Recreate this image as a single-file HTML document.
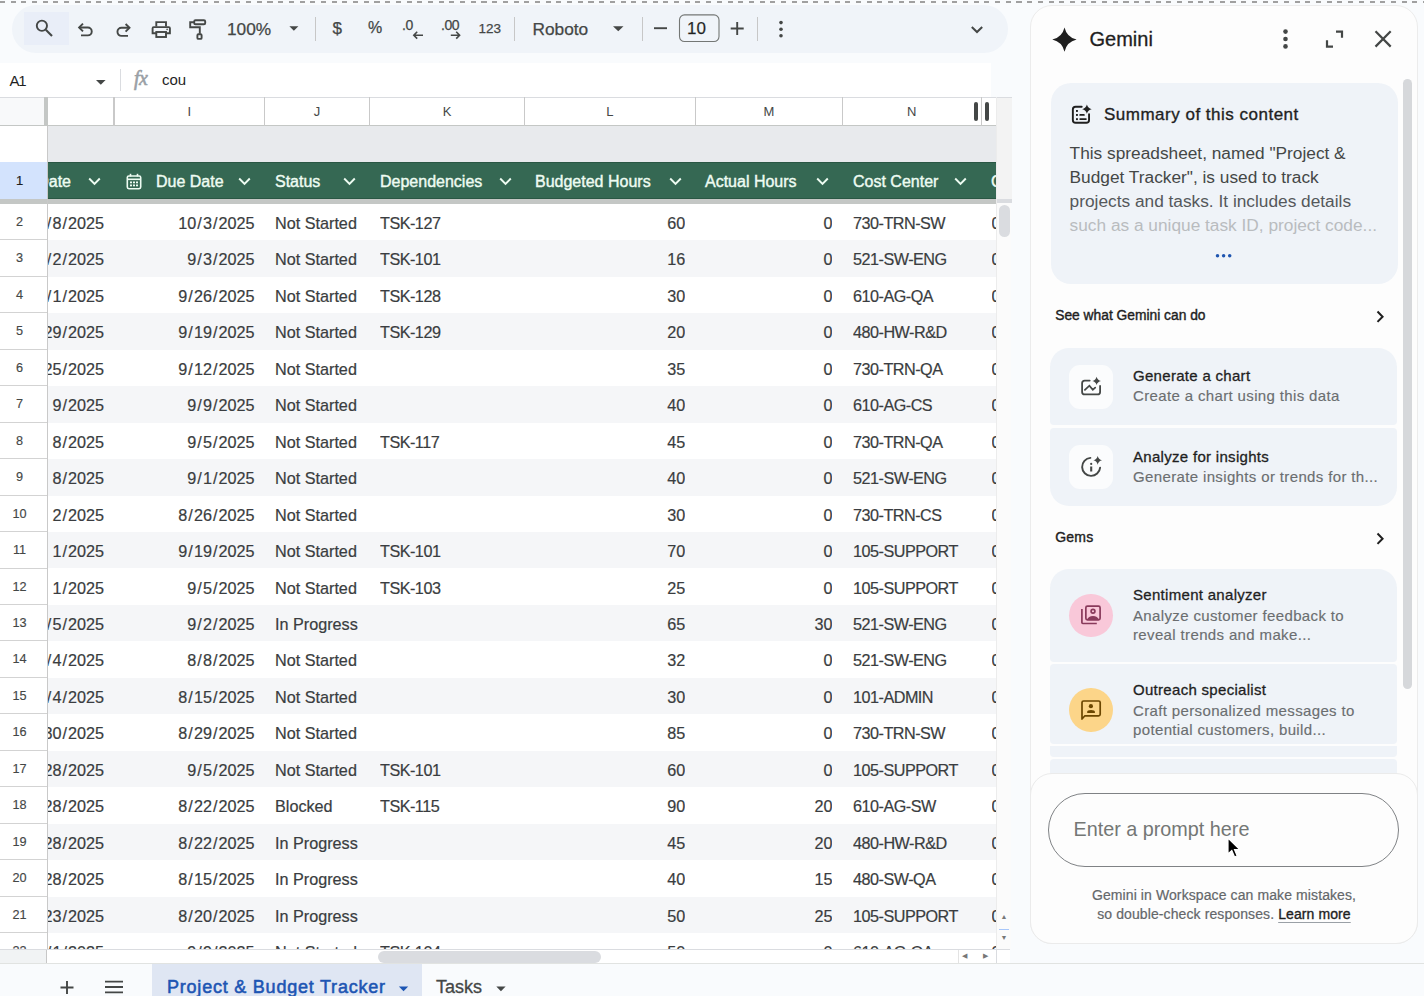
<!DOCTYPE html>
<html><head><meta charset="utf-8">
<style>
*{box-sizing:border-box;margin:0;padding:0}
html,body{width:1424px;height:996px;overflow:hidden;background:#f9fbfd;font-family:"Liberation Sans",sans-serif;color:#1f1f1f}
.abs{position:absolute}
.sl{margin:0 1.05px}
#dash{position:absolute;left:0;top:1.2px;width:1424px;height:1.6px;background:repeating-linear-gradient(90deg,#a0a0a0 0 5px,transparent 5px 10.7px)}
#tb{position:absolute;left:12px;top:5px;width:996px;height:48px;border-radius:24px;background:#f0f4f9}
.sep{position:absolute;top:12px;width:1px;height:24px;background:#c7c7c7}
.tt{position:absolute;font-size:17px;color:#444746;white-space:nowrap;-webkit-text-stroke:0.25px #444746}
#fb{position:absolute;left:0;top:63px;width:991px;height:34px;background:#fff}
#grid{position:absolute;left:0;top:97px;width:996px;height:852px;background:#fff;overflow:hidden}
.colL{top:7px;text-align:center;font-size:13px;color:#444746;line-height:15px}
.vl{position:absolute;width:1.2px;background:#c9c9c9}
.rn{left:0;width:47px;padding-right:8px;height:36.5px;border-bottom:1.5px solid #d3d3d3;background:#fff;font-size:12.7px;color:#444746;text-align:center;line-height:37px;-webkit-text-stroke:0.15px #444746}
.c{position:absolute;height:36px;line-height:39.6px;font-size:16.2px;color:#3a3d40;-webkit-text-stroke:0.2px #3a3d40;white-space:nowrap;overflow:hidden}
.hd{position:absolute;top:65px;left:48px;width:948px;height:37px;background:#356853;border-top:1px solid #2a5744;border-bottom:1px solid #2a5744}
.hd .h{position:absolute;top:0;line-height:37.5px;font-size:16px;color:#eefcf2;-webkit-text-stroke:0.4px #eefcf2;white-space:nowrap}
#vs{position:absolute;left:996px;top:97px;width:14.5px;height:852px;background:#fbfbfb;border-left:1px solid #ececec}
#hs{position:absolute;left:0;top:949px;width:1010px;height:14px;background:#fff;border-top:1px solid #dadce0}
#bb{position:absolute;left:0;top:963px;width:1424px;height:33px;background:#f9fbfd;border-top:1px solid #e1e3e1}
#gp{position:absolute;left:1029.5px;top:5px;width:388px;height:939px;border-radius:22px;background:#fdfdfd;border:1px solid #ececec}
.card{position:absolute;left:20px;width:347px;background:#f0f4f9}
.gt{position:absolute;white-space:nowrap}
</style></head><body>
<div id="dash"></div>
<div id="tb"></div>
<div class="abs" style="left:23.5px;top:12px;width:45px;height:33px;background:#e9eef8"></div>
<svg class="abs" style="left:0;top:0" width="1010" height="60" viewBox="0 0 1010 60" fill="none" stroke="#444746" stroke-width="1.9">
 <circle cx="41.9" cy="25.75" r="5.1"/><path d="M45.8 29.7 L52 35.9" stroke-width="2.1"/>
 <path d="M81 35.4 H87.8 A3.95 3.95 0 0 0 87.8 27.5 H79.5"/><path d="M83 23.6 L79.1 27.5 L83 31.4"/>
 <path d="M128 35.9 H121.5 A4.05 4.05 0 0 1 121.5 27.8 H129"/><path d="M125.6 24 L129.5 27.8 L125.6 31.6"/>
 <path d="M156.3 26.5 V22.1 H166 V26.5"/><path d="M156.3 33.3 H152.6 V28.2 Q152.6 27.1 153.7 27.1 H168.8 Q169.9 27.1 169.9 28.2 V33.3 H166"/><rect x="156.3" y="32" width="9.7" height="5" />
 <circle cx="167.1" cy="29.4" r="0.8" fill="#444746" stroke="none"/>
 <rect x="194.2" y="20.2" width="11" height="4" rx="1.3"/><path d="M194.2 22.3 H190.2 V27.3 H199.8 V33.8"/><rect x="197.4" y="34.2" width="4.2" height="4.7" rx="1"/>
 <path d="M289.4 26.3 H298.4 L293.9 30.8Z" fill="#444746" stroke="none"/>
 <path d="M613 26.3 H623.5 L618.25 31.3Z" fill="#444746" stroke="none"/>
 <path d="M654 28.2 H667"/><path d="M730.7 28.5 H743.7 M737.2 22 V35"/>
 <rect x="679.5" y="14.9" width="39.5" height="26.6" rx="5" stroke="#747775" stroke-width="1.1"/>
 <circle cx="781" cy="22.6" r="1.8" fill="#444746" stroke="none"/><circle cx="781" cy="29.2" r="1.8" fill="#444746" stroke="none"/><circle cx="781" cy="35.8" r="1.8" fill="#444746" stroke="none"/>
 <path d="M971.8 27 L977 32 L982.2 27" stroke-width="2"/>
 <path d="M413.5 35.2 H423 M417.2 31.8 L413.8 35.2 L417.2 38.6" stroke-width="1.6"/>
 <path d="M450.8 35.2 H459.6 M456.2 31.8 L459.6 35.2 L456.2 38.6" stroke-width="1.6"/>
</svg>
<div class="sep" style="left:314.6px;top:17px"></div>
<div class="sep" style="left:513.5px;top:17px"></div>
<div class="sep" style="left:641.5px;top:17px"></div>
<div class="sep" style="left:757px;top:17px"></div>
<div class="tt" style="left:227px;top:19px;font-size:17.3px">100%</div>
<div class="tt" style="left:332.5px;top:18.5px;font-size:17px">$</div>
<div class="tt" style="left:368px;top:19px;font-size:16px">%</div>
<div class="tt" style="left:402px;top:17px;font-size:14px;letter-spacing:-0.5px">.0</div>
<div class="tt" style="left:441px;top:17px;font-size:14px;letter-spacing:-0.5px">.00</div>
<div class="tt" style="left:478.5px;top:21px;font-size:13.5px">123</div>
<div class="tt" style="left:532.5px;top:19px;font-size:17.3px">Roboto</div>
<div class="tt" style="left:687px;top:19px;font-size:17px;color:#1f1f1f">10</div>
<div id="fb">
 <div class="abs" style="left:9.5px;top:8.5px;font-size:15px;color:#1f1f1f;letter-spacing:-1.3px">A1</div>
 <svg class="abs" style="left:96px;top:16.5px" width="10" height="5" viewBox="0 0 10 5"><path d="M0 0 L9.6 0 L4.8 4.8Z" fill="#444746"/></svg>
 <div class="abs" style="left:120px;top:6px;width:1px;height:22px;background:#dadce0"></div>
 <div class="abs" style="left:134px;top:4px;font-family:'Liberation Serif',serif;font-style:italic;font-size:20px;color:#9aa0a6;-webkit-text-stroke:0.6px #9aa0a6;letter-spacing:-0.5px">fx</div>
 <div class="abs" style="left:162px;top:8px;font-size:15px;color:#1f1f1f">cou</div>
</div>
<div id="grid"><div class="abs" style="left:0;top:0;width:996px;height:29px;background:#fff;border-bottom:1.5px solid #c4c7c5;border-top:1px solid #dadce0"></div><div class="abs" style="left:0;top:0;width:44px;height:29px;background:#f8f9fa;border-bottom:1.5px solid #c4c7c5;border-top:1px solid #dadce0"></div><div class="abs" style="left:44px;top:0;width:4px;height:29px;background:#c4c7c5"></div><div class="vl" style="left:113.4px;top:0;height:29px"></div><div class="abs colL" style="left:114px;width:150.5px">I</div><div class="vl" style="left:263.9px;top:0;height:29px"></div><div class="abs colL" style="left:264.5px;width:105.0px">J</div><div class="vl" style="left:368.9px;top:0;height:29px"></div><div class="abs colL" style="left:369.5px;width:155.0px">K</div><div class="vl" style="left:523.9px;top:0;height:29px"></div><div class="abs colL" style="left:524.5px;width:170.79999999999995px">L</div><div class="vl" style="left:694.6999999999999px;top:0;height:29px"></div><div class="abs colL" style="left:695.3px;width:147.20000000000005px">M</div><div class="vl" style="left:841.9px;top:0;height:29px"></div><div class="abs colL" style="left:842.5px;width:138.5px">N</div><div class="vl" style="left:981px;top:0;height:29px"></div><div class="abs" style="left:974px;top:5px;width:4px;height:19px;border-radius:2px;background:#444746"></div><div class="abs" style="left:984.5px;top:5px;width:4px;height:19px;border-radius:2px;background:#444746"></div><div class="abs" style="left:0;top:29px;width:47px;height:36px;background:#fff"></div><div class="abs" style="left:48px;top:29px;width:948px;height:36px;background:#e8eaed"></div><div class="vl" style="left:47px;top:29px;height:823px"></div><div class="abs" style="left:0;top:65px;width:47px;height:37px;background:#d3e3fd;font-size:13px;color:#1f1f1f;text-align:center;line-height:37px;padding-right:8px;-webkit-text-stroke:0.2px #1f1f1f">1</div><div class="hd"><div class="h" style="left:-1px;width:24px;overflow:hidden;direction:rtl">Date</div><svg class="abs" style="left:40px;top:14px" width="13" height="9" viewBox="0 0 13 9"><path d="M1.2 1.5 L6.5 7 L11.8 1.5" fill="none" stroke="#eefcf2" stroke-width="1.9"/></svg><svg class="abs" style="left:78px;top:10px" width="16" height="17" viewBox="0 0 16 17"><rect x="1.3" y="3" width="13.4" height="12.7" rx="1.6" fill="none" stroke="#eefcf2" stroke-width="1.6"/><line x1="1.3" y1="6.3" x2="14.7" y2="6.3" stroke="#eefcf2" stroke-width="1.6"/><line x1="4.5" y1="0.8" x2="4.5" y2="3.5" stroke="#eefcf2" stroke-width="1.6"/><line x1="11.5" y1="0.8" x2="11.5" y2="3.5" stroke="#eefcf2" stroke-width="1.6"/><g fill="#eefcf2"><rect x="4" y="8.5" width="2" height="1.8"/><rect x="7" y="8.5" width="2" height="1.8"/><rect x="10" y="8.5" width="2" height="1.8"/><rect x="4" y="11.5" width="2" height="1.8"/><rect x="7" y="11.5" width="2" height="1.8"/><rect x="10" y="11.5" width="2" height="1.8"/></g></svg><div class="h" style="left:108px">Due Date</div><svg class="abs" style="left:190px;top:14px" width="13" height="9" viewBox="0 0 13 9"><path d="M1.2 1.5 L6.5 7 L11.8 1.5" fill="none" stroke="#eefcf2" stroke-width="1.9"/></svg><div class="h" style="left:227px">Status</div><svg class="abs" style="left:295px;top:14px" width="13" height="9" viewBox="0 0 13 9"><path d="M1.2 1.5 L6.5 7 L11.8 1.5" fill="none" stroke="#eefcf2" stroke-width="1.9"/></svg><div class="h" style="left:332px">Dependencies</div><svg class="abs" style="left:451px;top:14px" width="13" height="9" viewBox="0 0 13 9"><path d="M1.2 1.5 L6.5 7 L11.8 1.5" fill="none" stroke="#eefcf2" stroke-width="1.9"/></svg><div class="h" style="left:487px">Budgeted Hours</div><svg class="abs" style="left:621px;top:14px" width="13" height="9" viewBox="0 0 13 9"><path d="M1.2 1.5 L6.5 7 L11.8 1.5" fill="none" stroke="#eefcf2" stroke-width="1.9"/></svg><div class="h" style="left:657px">Actual Hours</div><svg class="abs" style="left:768px;top:14px" width="13" height="9" viewBox="0 0 13 9"><path d="M1.2 1.5 L6.5 7 L11.8 1.5" fill="none" stroke="#eefcf2" stroke-width="1.9"/></svg><div class="h" style="left:805px">Cost Center</div><svg class="abs" style="left:906px;top:14px" width="13" height="9" viewBox="0 0 13 9"><path d="M1.2 1.5 L6.5 7 L11.8 1.5" fill="none" stroke="#eefcf2" stroke-width="1.9"/></svg><div class="h" style="left:943px">Cost</div></div><div class="abs" style="left:0;top:102px;width:996px;height:4.7px;background:#c4c7c5"></div><div class="abs" style="left:0;top:106.69999999999999px;width:47px;height:36.48px;border-bottom:1.5px solid #d3d3d3;background:#fff"><span class="rnum">2</span></div><div class="abs" style="left:48px;top:106.69999999999999px;width:948px;height:36.48px;background:#fff"></div><div class="c" style="left:-12px;width:116px;top:106.69999999999999px;text-align:right">9<span class="sl">/</span>8<span class="sl">/</span>2025</div><div class="c" style="left:114px;width:140.5px;top:106.69999999999999px;text-align:right">10<span class="sl">/</span>3<span class="sl">/</span>2025</div><div class="c" style="left:275.0px;width:95.0px;top:106.69999999999999px;">Not Started</div><div class="c" style="left:380.0px;width:145.0px;top:106.69999999999999px;letter-spacing:-0.5px;">TSK-127</div><div class="c" style="left:524.5px;width:160.79999999999995px;top:106.69999999999999px;text-align:right">60</div><div class="c" style="left:695.3px;width:137.20000000000005px;top:106.69999999999999px;text-align:right">0</div><div class="c" style="left:853.0px;width:128.5px;top:106.69999999999999px;letter-spacing:-0.5px;">730-TRN-SW</div><div class="c" style="left:991.5px;width:69px;top:106.69999999999999px;">0</div><div class="abs" style="left:0;top:143.17999999999998px;width:47px;height:36.48px;border-bottom:1.5px solid #d3d3d3;background:#fff"><span class="rnum">3</span></div><div class="abs" style="left:48px;top:143.17999999999998px;width:948px;height:36.48px;background:#f5f6f8"></div><div class="c" style="left:-12px;width:116px;top:143.17999999999998px;text-align:right">9<span class="sl">/</span>2<span class="sl">/</span>2025</div><div class="c" style="left:114px;width:140.5px;top:143.17999999999998px;text-align:right">9<span class="sl">/</span>3<span class="sl">/</span>2025</div><div class="c" style="left:275.0px;width:95.0px;top:143.17999999999998px;">Not Started</div><div class="c" style="left:380.0px;width:145.0px;top:143.17999999999998px;letter-spacing:-0.5px;">TSK-101</div><div class="c" style="left:524.5px;width:160.79999999999995px;top:143.17999999999998px;text-align:right">16</div><div class="c" style="left:695.3px;width:137.20000000000005px;top:143.17999999999998px;text-align:right">0</div><div class="c" style="left:853.0px;width:128.5px;top:143.17999999999998px;letter-spacing:-0.5px;">521-SW-ENG</div><div class="c" style="left:991.5px;width:69px;top:143.17999999999998px;">0</div><div class="abs" style="left:0;top:179.65999999999997px;width:47px;height:36.48px;border-bottom:1.5px solid #d3d3d3;background:#fff"><span class="rnum">4</span></div><div class="abs" style="left:48px;top:179.65999999999997px;width:948px;height:36.48px;background:#fff"></div><div class="c" style="left:-12px;width:116px;top:179.65999999999997px;text-align:right">9<span class="sl">/</span>1<span class="sl">/</span>2025</div><div class="c" style="left:114px;width:140.5px;top:179.65999999999997px;text-align:right">9<span class="sl">/</span>26<span class="sl">/</span>2025</div><div class="c" style="left:275.0px;width:95.0px;top:179.65999999999997px;">Not Started</div><div class="c" style="left:380.0px;width:145.0px;top:179.65999999999997px;letter-spacing:-0.5px;">TSK-128</div><div class="c" style="left:524.5px;width:160.79999999999995px;top:179.65999999999997px;text-align:right">30</div><div class="c" style="left:695.3px;width:137.20000000000005px;top:179.65999999999997px;text-align:right">0</div><div class="c" style="left:853.0px;width:128.5px;top:179.65999999999997px;letter-spacing:-0.5px;">610-AG-QA</div><div class="c" style="left:991.5px;width:69px;top:179.65999999999997px;">0</div><div class="abs" style="left:0;top:216.14px;width:47px;height:36.48px;border-bottom:1.5px solid #d3d3d3;background:#fff"><span class="rnum">5</span></div><div class="abs" style="left:48px;top:216.14px;width:948px;height:36.48px;background:#f5f6f8"></div><div class="c" style="left:-12px;width:116px;top:216.14px;text-align:right">8<span class="sl">/</span>29<span class="sl">/</span>2025</div><div class="c" style="left:114px;width:140.5px;top:216.14px;text-align:right">9<span class="sl">/</span>19<span class="sl">/</span>2025</div><div class="c" style="left:275.0px;width:95.0px;top:216.14px;">Not Started</div><div class="c" style="left:380.0px;width:145.0px;top:216.14px;letter-spacing:-0.5px;">TSK-129</div><div class="c" style="left:524.5px;width:160.79999999999995px;top:216.14px;text-align:right">20</div><div class="c" style="left:695.3px;width:137.20000000000005px;top:216.14px;text-align:right">0</div><div class="c" style="left:853.0px;width:128.5px;top:216.14px;letter-spacing:-0.5px;">480-HW-R&amp;D</div><div class="c" style="left:991.5px;width:69px;top:216.14px;">0</div><div class="abs" style="left:0;top:252.62px;width:47px;height:36.48px;border-bottom:1.5px solid #d3d3d3;background:#fff"><span class="rnum">6</span></div><div class="abs" style="left:48px;top:252.62px;width:948px;height:36.48px;background:#fff"></div><div class="c" style="left:-12px;width:116px;top:252.62px;text-align:right">8<span class="sl">/</span>25<span class="sl">/</span>2025</div><div class="c" style="left:114px;width:140.5px;top:252.62px;text-align:right">9<span class="sl">/</span>12<span class="sl">/</span>2025</div><div class="c" style="left:275.0px;width:95.0px;top:252.62px;">Not Started</div><div class="c" style="left:524.5px;width:160.79999999999995px;top:252.62px;text-align:right">35</div><div class="c" style="left:695.3px;width:137.20000000000005px;top:252.62px;text-align:right">0</div><div class="c" style="left:853.0px;width:128.5px;top:252.62px;letter-spacing:-0.5px;">730-TRN-QA</div><div class="c" style="left:991.5px;width:69px;top:252.62px;">0</div><div class="abs" style="left:0;top:289.09999999999997px;width:47px;height:36.48px;border-bottom:1.5px solid #d3d3d3;background:#fff"><span class="rnum">7</span></div><div class="abs" style="left:48px;top:289.09999999999997px;width:948px;height:36.48px;background:#f5f6f8"></div><div class="c" style="left:-12px;width:116px;top:289.09999999999997px;text-align:right">9<span class="sl">/</span>2025</div><div class="c" style="left:114px;width:140.5px;top:289.09999999999997px;text-align:right">9<span class="sl">/</span>9<span class="sl">/</span>2025</div><div class="c" style="left:275.0px;width:95.0px;top:289.09999999999997px;">Not Started</div><div class="c" style="left:524.5px;width:160.79999999999995px;top:289.09999999999997px;text-align:right">40</div><div class="c" style="left:695.3px;width:137.20000000000005px;top:289.09999999999997px;text-align:right">0</div><div class="c" style="left:853.0px;width:128.5px;top:289.09999999999997px;letter-spacing:-0.5px;">610-AG-CS</div><div class="c" style="left:991.5px;width:69px;top:289.09999999999997px;">0</div><div class="abs" style="left:0;top:325.58px;width:47px;height:36.48px;border-bottom:1.5px solid #d3d3d3;background:#fff"><span class="rnum">8</span></div><div class="abs" style="left:48px;top:325.58px;width:948px;height:36.48px;background:#fff"></div><div class="c" style="left:-12px;width:116px;top:325.58px;text-align:right">8<span class="sl">/</span>2025</div><div class="c" style="left:114px;width:140.5px;top:325.58px;text-align:right">9<span class="sl">/</span>5<span class="sl">/</span>2025</div><div class="c" style="left:275.0px;width:95.0px;top:325.58px;">Not Started</div><div class="c" style="left:380.0px;width:145.0px;top:325.58px;letter-spacing:-0.5px;">TSK-117</div><div class="c" style="left:524.5px;width:160.79999999999995px;top:325.58px;text-align:right">45</div><div class="c" style="left:695.3px;width:137.20000000000005px;top:325.58px;text-align:right">0</div><div class="c" style="left:853.0px;width:128.5px;top:325.58px;letter-spacing:-0.5px;">730-TRN-QA</div><div class="c" style="left:991.5px;width:69px;top:325.58px;">0</div><div class="abs" style="left:0;top:362.05999999999995px;width:47px;height:36.48px;border-bottom:1.5px solid #d3d3d3;background:#fff"><span class="rnum">9</span></div><div class="abs" style="left:48px;top:362.05999999999995px;width:948px;height:36.48px;background:#f5f6f8"></div><div class="c" style="left:-12px;width:116px;top:362.05999999999995px;text-align:right">8<span class="sl">/</span>2025</div><div class="c" style="left:114px;width:140.5px;top:362.05999999999995px;text-align:right">9<span class="sl">/</span>1<span class="sl">/</span>2025</div><div class="c" style="left:275.0px;width:95.0px;top:362.05999999999995px;">Not Started</div><div class="c" style="left:524.5px;width:160.79999999999995px;top:362.05999999999995px;text-align:right">40</div><div class="c" style="left:695.3px;width:137.20000000000005px;top:362.05999999999995px;text-align:right">0</div><div class="c" style="left:853.0px;width:128.5px;top:362.05999999999995px;letter-spacing:-0.5px;">521-SW-ENG</div><div class="c" style="left:991.5px;width:69px;top:362.05999999999995px;">0</div><div class="abs" style="left:0;top:398.53999999999996px;width:47px;height:36.48px;border-bottom:1.5px solid #d3d3d3;background:#fff"><span class="rnum">10</span></div><div class="abs" style="left:48px;top:398.53999999999996px;width:948px;height:36.48px;background:#fff"></div><div class="c" style="left:-12px;width:116px;top:398.53999999999996px;text-align:right">2<span class="sl">/</span>2025</div><div class="c" style="left:114px;width:140.5px;top:398.53999999999996px;text-align:right">8<span class="sl">/</span>26<span class="sl">/</span>2025</div><div class="c" style="left:275.0px;width:95.0px;top:398.53999999999996px;">Not Started</div><div class="c" style="left:524.5px;width:160.79999999999995px;top:398.53999999999996px;text-align:right">30</div><div class="c" style="left:695.3px;width:137.20000000000005px;top:398.53999999999996px;text-align:right">0</div><div class="c" style="left:853.0px;width:128.5px;top:398.53999999999996px;letter-spacing:-0.5px;">730-TRN-CS</div><div class="c" style="left:991.5px;width:69px;top:398.53999999999996px;">0</div><div class="abs" style="left:0;top:435.02px;width:47px;height:36.48px;border-bottom:1.5px solid #d3d3d3;background:#fff"><span class="rnum">11</span></div><div class="abs" style="left:48px;top:435.02px;width:948px;height:36.48px;background:#f5f6f8"></div><div class="c" style="left:-12px;width:116px;top:435.02px;text-align:right">1<span class="sl">/</span>2025</div><div class="c" style="left:114px;width:140.5px;top:435.02px;text-align:right">9<span class="sl">/</span>19<span class="sl">/</span>2025</div><div class="c" style="left:275.0px;width:95.0px;top:435.02px;">Not Started</div><div class="c" style="left:380.0px;width:145.0px;top:435.02px;letter-spacing:-0.5px;">TSK-101</div><div class="c" style="left:524.5px;width:160.79999999999995px;top:435.02px;text-align:right">70</div><div class="c" style="left:695.3px;width:137.20000000000005px;top:435.02px;text-align:right">0</div><div class="c" style="left:853.0px;width:128.5px;top:435.02px;letter-spacing:-0.5px;">105-SUPPORT</div><div class="c" style="left:991.5px;width:69px;top:435.02px;">0</div><div class="abs" style="left:0;top:471.5px;width:47px;height:36.48px;border-bottom:1.5px solid #d3d3d3;background:#fff"><span class="rnum">12</span></div><div class="abs" style="left:48px;top:471.5px;width:948px;height:36.48px;background:#fff"></div><div class="c" style="left:-12px;width:116px;top:471.5px;text-align:right">1<span class="sl">/</span>2025</div><div class="c" style="left:114px;width:140.5px;top:471.5px;text-align:right">9<span class="sl">/</span>5<span class="sl">/</span>2025</div><div class="c" style="left:275.0px;width:95.0px;top:471.5px;">Not Started</div><div class="c" style="left:380.0px;width:145.0px;top:471.5px;letter-spacing:-0.5px;">TSK-103</div><div class="c" style="left:524.5px;width:160.79999999999995px;top:471.5px;text-align:right">25</div><div class="c" style="left:695.3px;width:137.20000000000005px;top:471.5px;text-align:right">0</div><div class="c" style="left:853.0px;width:128.5px;top:471.5px;letter-spacing:-0.5px;">105-SUPPORT</div><div class="c" style="left:991.5px;width:69px;top:471.5px;">0</div><div class="abs" style="left:0;top:507.98px;width:47px;height:36.48px;border-bottom:1.5px solid #d3d3d3;background:#fff"><span class="rnum">13</span></div><div class="abs" style="left:48px;top:507.98px;width:948px;height:36.48px;background:#f5f6f8"></div><div class="c" style="left:-12px;width:116px;top:507.98px;text-align:right">7<span class="sl">/</span>5<span class="sl">/</span>2025</div><div class="c" style="left:114px;width:140.5px;top:507.98px;text-align:right">9<span class="sl">/</span>2<span class="sl">/</span>2025</div><div class="c" style="left:275.0px;width:95.0px;top:507.98px;">In Progress</div><div class="c" style="left:524.5px;width:160.79999999999995px;top:507.98px;text-align:right">65</div><div class="c" style="left:695.3px;width:137.20000000000005px;top:507.98px;text-align:right">30</div><div class="c" style="left:853.0px;width:128.5px;top:507.98px;letter-spacing:-0.5px;">521-SW-ENG</div><div class="c" style="left:991.5px;width:69px;top:507.98px;">0</div><div class="abs" style="left:0;top:544.46px;width:47px;height:36.48px;border-bottom:1.5px solid #d3d3d3;background:#fff"><span class="rnum">14</span></div><div class="abs" style="left:48px;top:544.46px;width:948px;height:36.48px;background:#fff"></div><div class="c" style="left:-12px;width:116px;top:544.46px;text-align:right">7<span class="sl">/</span>4<span class="sl">/</span>2025</div><div class="c" style="left:114px;width:140.5px;top:544.46px;text-align:right">8<span class="sl">/</span>8<span class="sl">/</span>2025</div><div class="c" style="left:275.0px;width:95.0px;top:544.46px;">Not Started</div><div class="c" style="left:524.5px;width:160.79999999999995px;top:544.46px;text-align:right">32</div><div class="c" style="left:695.3px;width:137.20000000000005px;top:544.46px;text-align:right">0</div><div class="c" style="left:853.0px;width:128.5px;top:544.46px;letter-spacing:-0.5px;">521-SW-ENG</div><div class="c" style="left:991.5px;width:69px;top:544.46px;">0</div><div class="abs" style="left:0;top:580.9399999999999px;width:47px;height:36.48px;border-bottom:1.5px solid #d3d3d3;background:#fff"><span class="rnum">15</span></div><div class="abs" style="left:48px;top:580.9399999999999px;width:948px;height:36.48px;background:#f5f6f8"></div><div class="c" style="left:-12px;width:116px;top:580.9399999999999px;text-align:right">7<span class="sl">/</span>4<span class="sl">/</span>2025</div><div class="c" style="left:114px;width:140.5px;top:580.9399999999999px;text-align:right">8<span class="sl">/</span>15<span class="sl">/</span>2025</div><div class="c" style="left:275.0px;width:95.0px;top:580.9399999999999px;">Not Started</div><div class="c" style="left:524.5px;width:160.79999999999995px;top:580.9399999999999px;text-align:right">30</div><div class="c" style="left:695.3px;width:137.20000000000005px;top:580.9399999999999px;text-align:right">0</div><div class="c" style="left:853.0px;width:128.5px;top:580.9399999999999px;letter-spacing:-0.5px;">101-ADMIN</div><div class="c" style="left:991.5px;width:69px;top:580.9399999999999px;">0</div><div class="abs" style="left:0;top:617.42px;width:47px;height:36.48px;border-bottom:1.5px solid #d3d3d3;background:#fff"><span class="rnum">16</span></div><div class="abs" style="left:48px;top:617.42px;width:948px;height:36.48px;background:#fff"></div><div class="c" style="left:-12px;width:116px;top:617.42px;text-align:right">7<span class="sl">/</span>30<span class="sl">/</span>2025</div><div class="c" style="left:114px;width:140.5px;top:617.42px;text-align:right">8<span class="sl">/</span>29<span class="sl">/</span>2025</div><div class="c" style="left:275.0px;width:95.0px;top:617.42px;">Not Started</div><div class="c" style="left:524.5px;width:160.79999999999995px;top:617.42px;text-align:right">85</div><div class="c" style="left:695.3px;width:137.20000000000005px;top:617.42px;text-align:right">0</div><div class="c" style="left:853.0px;width:128.5px;top:617.42px;letter-spacing:-0.5px;">730-TRN-SW</div><div class="c" style="left:991.5px;width:69px;top:617.42px;">0</div><div class="abs" style="left:0;top:653.8999999999999px;width:47px;height:36.48px;border-bottom:1.5px solid #d3d3d3;background:#fff"><span class="rnum">17</span></div><div class="abs" style="left:48px;top:653.8999999999999px;width:948px;height:36.48px;background:#f5f6f8"></div><div class="c" style="left:-12px;width:116px;top:653.8999999999999px;text-align:right">7<span class="sl">/</span>28<span class="sl">/</span>2025</div><div class="c" style="left:114px;width:140.5px;top:653.8999999999999px;text-align:right">9<span class="sl">/</span>5<span class="sl">/</span>2025</div><div class="c" style="left:275.0px;width:95.0px;top:653.8999999999999px;">Not Started</div><div class="c" style="left:380.0px;width:145.0px;top:653.8999999999999px;letter-spacing:-0.5px;">TSK-101</div><div class="c" style="left:524.5px;width:160.79999999999995px;top:653.8999999999999px;text-align:right">60</div><div class="c" style="left:695.3px;width:137.20000000000005px;top:653.8999999999999px;text-align:right">0</div><div class="c" style="left:853.0px;width:128.5px;top:653.8999999999999px;letter-spacing:-0.5px;">105-SUPPORT</div><div class="c" style="left:991.5px;width:69px;top:653.8999999999999px;">0</div><div class="abs" style="left:0;top:690.3799999999999px;width:47px;height:36.48px;border-bottom:1.5px solid #d3d3d3;background:#fff"><span class="rnum">18</span></div><div class="abs" style="left:48px;top:690.3799999999999px;width:948px;height:36.48px;background:#fff"></div><div class="c" style="left:-12px;width:116px;top:690.3799999999999px;text-align:right">7<span class="sl">/</span>28<span class="sl">/</span>2025</div><div class="c" style="left:114px;width:140.5px;top:690.3799999999999px;text-align:right">8<span class="sl">/</span>22<span class="sl">/</span>2025</div><div class="c" style="left:275.0px;width:95.0px;top:690.3799999999999px;">Blocked</div><div class="c" style="left:380.0px;width:145.0px;top:690.3799999999999px;letter-spacing:-0.5px;">TSK-115</div><div class="c" style="left:524.5px;width:160.79999999999995px;top:690.3799999999999px;text-align:right">90</div><div class="c" style="left:695.3px;width:137.20000000000005px;top:690.3799999999999px;text-align:right">20</div><div class="c" style="left:853.0px;width:128.5px;top:690.3799999999999px;letter-spacing:-0.5px;">610-AG-SW</div><div class="c" style="left:991.5px;width:69px;top:690.3799999999999px;">0</div><div class="abs" style="left:0;top:726.8599999999999px;width:47px;height:36.48px;border-bottom:1.5px solid #d3d3d3;background:#fff"><span class="rnum">19</span></div><div class="abs" style="left:48px;top:726.8599999999999px;width:948px;height:36.48px;background:#f5f6f8"></div><div class="c" style="left:-12px;width:116px;top:726.8599999999999px;text-align:right">7<span class="sl">/</span>28<span class="sl">/</span>2025</div><div class="c" style="left:114px;width:140.5px;top:726.8599999999999px;text-align:right">8<span class="sl">/</span>22<span class="sl">/</span>2025</div><div class="c" style="left:275.0px;width:95.0px;top:726.8599999999999px;">In Progress</div><div class="c" style="left:524.5px;width:160.79999999999995px;top:726.8599999999999px;text-align:right">45</div><div class="c" style="left:695.3px;width:137.20000000000005px;top:726.8599999999999px;text-align:right">20</div><div class="c" style="left:853.0px;width:128.5px;top:726.8599999999999px;letter-spacing:-0.5px;">480-HW-R&amp;D</div><div class="c" style="left:991.5px;width:69px;top:726.8599999999999px;">0</div><div class="abs" style="left:0;top:763.3399999999999px;width:47px;height:36.48px;border-bottom:1.5px solid #d3d3d3;background:#fff"><span class="rnum">20</span></div><div class="abs" style="left:48px;top:763.3399999999999px;width:948px;height:36.48px;background:#fff"></div><div class="c" style="left:-12px;width:116px;top:763.3399999999999px;text-align:right">7<span class="sl">/</span>28<span class="sl">/</span>2025</div><div class="c" style="left:114px;width:140.5px;top:763.3399999999999px;text-align:right">8<span class="sl">/</span>15<span class="sl">/</span>2025</div><div class="c" style="left:275.0px;width:95.0px;top:763.3399999999999px;">In Progress</div><div class="c" style="left:524.5px;width:160.79999999999995px;top:763.3399999999999px;text-align:right">40</div><div class="c" style="left:695.3px;width:137.20000000000005px;top:763.3399999999999px;text-align:right">15</div><div class="c" style="left:853.0px;width:128.5px;top:763.3399999999999px;letter-spacing:-0.5px;">480-SW-QA</div><div class="c" style="left:991.5px;width:69px;top:763.3399999999999px;">0</div><div class="abs" style="left:0;top:799.8199999999999px;width:47px;height:36.48px;border-bottom:1.5px solid #d3d3d3;background:#fff"><span class="rnum">21</span></div><div class="abs" style="left:48px;top:799.8199999999999px;width:948px;height:36.48px;background:#f5f6f8"></div><div class="c" style="left:-12px;width:116px;top:799.8199999999999px;text-align:right">7<span class="sl">/</span>23<span class="sl">/</span>2025</div><div class="c" style="left:114px;width:140.5px;top:799.8199999999999px;text-align:right">8<span class="sl">/</span>20<span class="sl">/</span>2025</div><div class="c" style="left:275.0px;width:95.0px;top:799.8199999999999px;">In Progress</div><div class="c" style="left:524.5px;width:160.79999999999995px;top:799.8199999999999px;text-align:right">50</div><div class="c" style="left:695.3px;width:137.20000000000005px;top:799.8199999999999px;text-align:right">25</div><div class="c" style="left:853.0px;width:128.5px;top:799.8199999999999px;letter-spacing:-0.5px;">105-SUPPORT</div><div class="c" style="left:991.5px;width:69px;top:799.8199999999999px;">0</div><div class="abs" style="left:0;top:836.3px;width:47px;height:36.48px;border-bottom:1.5px solid #d3d3d3;background:#fff"><span class="rnum">22</span></div><div class="abs" style="left:48px;top:836.3px;width:948px;height:36.48px;background:#fff"></div><div class="c" style="left:-12px;width:116px;top:836.3px;text-align:right">8<span class="sl">/</span>1<span class="sl">/</span>2025</div><div class="c" style="left:114px;width:140.5px;top:836.3px;text-align:right">9<span class="sl">/</span>9<span class="sl">/</span>2025</div><div class="c" style="left:275.0px;width:95.0px;top:836.3px;">Not Started</div><div class="c" style="left:380.0px;width:145.0px;top:836.3px;letter-spacing:-0.5px;">TSK-104</div><div class="c" style="left:524.5px;width:160.79999999999995px;top:836.3px;text-align:right">50</div><div class="c" style="left:695.3px;width:137.20000000000005px;top:836.3px;text-align:right">0</div><div class="c" style="left:853.0px;width:128.5px;top:836.3px;letter-spacing:-0.5px;">610-AG-QA</div><div class="c" style="left:991.5px;width:69px;top:836.3px;">0</div><div class="abs rn" style="top:106.69999999999999px">2</div><div class="abs rn" style="top:143.17999999999998px">3</div><div class="abs rn" style="top:179.65999999999997px">4</div><div class="abs rn" style="top:216.14px">5</div><div class="abs rn" style="top:252.62px">6</div><div class="abs rn" style="top:289.09999999999997px">7</div><div class="abs rn" style="top:325.58px">8</div><div class="abs rn" style="top:362.05999999999995px">9</div><div class="abs rn" style="top:398.53999999999996px">10</div><div class="abs rn" style="top:435.02px">11</div><div class="abs rn" style="top:471.5px">12</div><div class="abs rn" style="top:507.98px">13</div><div class="abs rn" style="top:544.46px">14</div><div class="abs rn" style="top:580.9399999999999px">15</div><div class="abs rn" style="top:617.42px">16</div><div class="abs rn" style="top:653.8999999999999px">17</div><div class="abs rn" style="top:690.3799999999999px">18</div><div class="abs rn" style="top:726.8599999999999px">19</div><div class="abs rn" style="top:763.3399999999999px">20</div><div class="abs rn" style="top:799.8199999999999px">21</div><div class="abs rn" style="top:836.3px">22</div><div class="vl" style="left:47px;top:29px;height:823px"></div></div><div id="vs"><div class="abs" style="left:0;top:0;width:14.5px;height:102px;background:#f3f3f3;border-top:1px solid #dadce0"></div><div class="abs" style="left:0;top:101.5px;width:14.5px;height:4px;background:#dadce0"></div><div class="abs" style="left:2px;top:108px;width:11.2px;height:32px;border-radius:5.5px;background:#dadce0"></div><div class="abs" style="left:3.5px;top:816px;font-size:7px;color:#777">&#9650;</div><div class="abs" style="left:2px;top:832px;width:10px;height:1px;background:#a8c7fa"></div><div class="abs" style="left:3.5px;top:837px;font-size:7px;color:#777">&#9660;</div></div><div id="hs"><div class="abs" style="left:0;top:0;width:47px;height:14px;background:#f1f3f4;border-right:1px solid #c7c7c7"></div><div class="abs" style="left:378px;top:1px;width:223px;height:12px;border-radius:6px;background:#dadce0"></div><div class="abs" style="left:962px;top:2px;font-size:7px;color:#777">&#9664;</div><div class="abs" style="left:983px;top:2px;font-size:7px;color:#777">&#9654;</div><div class="abs" style="left:996px;top:0;width:1px;height:14px;background:#dadce0"></div><div class="abs" style="left:958px;top:0;width:1px;height:14px;background:#e3e3e3"></div></div><div id="bb">
 <svg class="abs" style="left:0;top:0" width="520" height="33" viewBox="0 0 520 33" fill="none" stroke="#444746" stroke-width="1.9">
  <path d="M60.5 23.5 H73.5 M67 17 V30"/>
  <path d="M105 17.6 H123 M105 23 H123 M105 28.4 H123"/>
  <path d="M398.9 22.4 H408.2 L403.55 27.2Z" fill="#0b57d0" stroke="none"/>
  <path d="M496.3 22.4 H505.6 L500.95 27.2Z" fill="#444746" stroke="none"/>
 </svg>
 <div class="abs" style="left:152px;top:0;width:269.6px;height:33px;background:#dfe6f3"></div>
 <div class="abs" style="left:167px;top:12.5px;font-size:18px;color:#1d55b3;-webkit-text-stroke:0.55px #1d55b3;letter-spacing:0.78px;white-space:nowrap">Project &amp; Budget Tracker</div>
 <svg class="abs" style="left:0;top:0" width="520" height="33" viewBox="0 0 520 33"><path d="M398.9 22.4 H408.2 L403.55 27.2Z" fill="#1d55b3"/></svg>
 <div class="abs" style="left:436px;top:13px;font-size:18px;color:#444746;-webkit-text-stroke:0.3px #444746">Tasks</div>
</div>
<div id="gp"></div>
<svg class="abs" style="left:0;top:0" width="1424" height="996" viewBox="0 0 1424 996">
 <path d="M1064.5 27.5 Q1066.8 37.3 1076.6 39.6 Q1066.8 41.9 1064.5 51.8 Q1062.2 41.9 1052.3 39.6 Q1062.2 37.3 1064.5 27.5Z" fill="#1f1f1f"/>
 <g fill="#444746"><circle cx="1285.5" cy="31.6" r="2.3"/><circle cx="1285.5" cy="39" r="2.3"/><circle cx="1285.5" cy="46.4" r="2.3"/></g>
 <g fill="none" stroke="#444746" stroke-width="2.2">
  <path d="M1336 31.7 H1342 V37.7"/><path d="M1327 40.3 V46.6 H1333"/>
  <path d="M1375.5 31.3 L1390.7 46.6 M1390.7 31.3 L1375.5 46.6"/>
 </g>
</svg>
<div class="gt" style="left:1089.5px;top:28px;font-size:20px;color:#1f1f1f;-webkit-text-stroke:0.3px #1f1f1f">Gemini</div>
<!-- scrollbar -->
<div class="abs" style="left:1403px;top:78.5px;width:9px;height:610px;border-radius:4.5px;background:#d6d8db"></div>
<!-- summary card -->
<div class="abs" style="left:1050.5px;top:83px;width:347px;height:201px;border-radius:20px;background:#eff3f8"></div>
<svg class="abs" style="left:0;top:0" width="1424" height="200" viewBox="0 0 1424 200" fill="none" stroke="#1f1f1f" stroke-width="1.9">
 <path d="M1081.7 106.75 H1075.6 Q1072.85 106.75 1072.85 109.5 V120 Q1072.85 122.8 1075.6 122.8 H1086.3 Q1089.05 122.8 1089.05 120 V114.2" stroke-linecap="round"/>
 <g fill="#1f1f1f" stroke="none"><rect x="1076" y="110" width="1.9" height="1.9"/><rect x="1076" y="114" width="1.9" height="1.9"/><rect x="1076" y="118.2" width="1.9" height="1.9"/></g>
 <path d="M1080.2 114.9 H1083.9 M1080.2 119.1 H1085.9" stroke-width="1.8" stroke-linecap="round"/>
 <path d="M1086.9 104.6 Q1087.9 108.4 1091.7 109.2 Q1087.9 110 1086.9 113.75 Q1085.9 110 1082.2 109.2 Q1085.9 108.4 1086.9 104.6Z" fill="#1f1f1f" stroke="none"/>
</svg>
<div class="gt" style="left:1104px;top:105px;font-size:17px;color:#1f1f1f;-webkit-text-stroke:0.35px #1f1f1f;letter-spacing:0.5px">Summary of this content</div>
<div class="gt" style="left:1069.6px;top:140.6px;font-size:17.3px;line-height:24.1px;color:#444746">This spreadsheet, named "Project &amp;<br>Budget Tracker", is used to track<br><span style="color:#55585b">projects and tasks. It includes details</span><br><span style="color:#b9bcbf">such as a unique task ID, project code...</span></div>
<svg class="abs" style="left:1210px;top:250px" width="28" height="12"><g fill="#1f55b0"><circle cx="7.5" cy="5.8" r="1.75"/><circle cx="13.6" cy="5.8" r="1.75"/><circle cx="19.7" cy="5.8" r="1.75"/></g></svg>
<!-- see what gemini can do -->
<div class="gt" style="left:1055.2px;top:307.5px;font-size:13.8px;color:#1f1f1f;-webkit-text-stroke:0.4px #1f1f1f">See what Gemini can do</div>
<svg class="abs" style="left:1370px;top:305px" width="20" height="24" fill="none" stroke="#1f1f1f" stroke-width="2"><path d="M7.5 6.5 L12.6 11.7 L7.5 16.9"/></svg>
<div class="abs" style="left:1050px;top:347.7px;width:347px;height:77.7px;border-radius:19px 19px 4px 4px;background:#eff3f8"></div>
<div class="abs" style="left:1050px;top:428px;width:347px;height:77.7px;border-radius:4px 4px 19px 19px;background:#eff3f8"></div>
<div class="abs" style="left:1069px;top:364.5px;width:43.7px;height:44.2px;border-radius:11px;background:#fbfcfd"></div>
<div class="abs" style="left:1069px;top:444.9px;width:43.7px;height:43.7px;border-radius:11px;background:#fbfcfd"></div>
<svg class="abs" style="left:0;top:0" width="1424" height="996" viewBox="0 0 1424 996" fill="none" stroke="#444746" stroke-width="2">
 <path d="M1089.7 380.6 H1084.7 Q1082.1 380.6 1082.1 383.2 V391.9 Q1082.1 394.45 1084.7 394.45 H1097.5 Q1100.1 394.45 1100.1 391.9 V385.9" stroke-width="1.8" stroke-linecap="round"/>
 <path d="M1084.9 389.8 L1089.4 385.7 L1092.8 389.8 L1095.2 387.6" stroke-width="1.8" stroke-linecap="round"/>
 <path d="M1096.6 376.7 Q1097.4 380.2 1101 381.1 Q1097.4 381.9 1096.6 385 Q1095.8 381.9 1092.4 381.1 Q1095.8 380.2 1096.6 376.7Z" fill="#444746" stroke="none"/>
 <path d="M1090.4 457.9 A9 9 0 1 0 1100.1 467.6" stroke-width="1.9" stroke-linecap="round"/><path d="M1091.2 466.5 V471.5" stroke-width="2.1"/><circle cx="1091.2" cy="463.9" r="1.1" fill="#444746" stroke="none"/>
 <path d="M1097.7 456 Q1098.5 459.5 1102 460.3 Q1098.5 461.1 1097.7 464.7 Q1096.9 461.1 1093.4 460.3 Q1096.9 459.5 1097.7 456Z" fill="#444746" stroke="none"/>
</svg>
<div class="gt" style="left:1133px;top:367px;font-size:15px;color:#1f1f1f;-webkit-text-stroke:0.3px #1f1f1f;letter-spacing:0.3px">Generate a chart</div>
<div class="gt" style="left:1133px;top:387px;font-size:15px;color:#6b6e70;letter-spacing:0.36px;-webkit-text-stroke:0.15px #6b6e70">Create a chart using this data</div>
<div class="gt" style="left:1133px;top:447.5px;font-size:15px;color:#1f1f1f;-webkit-text-stroke:0.3px #1f1f1f;letter-spacing:0.3px">Analyze for insights</div>
<div class="gt" style="left:1133px;top:467.5px;font-size:15px;color:#6b6e70;letter-spacing:0.36px;-webkit-text-stroke:0.15px #6b6e70">Generate insights or trends for th...</div>
<!-- gems -->
<div class="gt" style="left:1055.2px;top:529px;font-size:14px;color:#1f1f1f;-webkit-text-stroke:0.4px #1f1f1f;letter-spacing:0.2px">Gems</div>
<svg class="abs" style="left:1370px;top:527px" width="20" height="24" fill="none" stroke="#1f1f1f" stroke-width="2"><path d="M7.5 6.5 L12.6 11.7 L7.5 16.9"/></svg>
<div class="abs" style="left:1050px;top:569.3px;width:347px;height:92.8px;border-radius:19px 19px 4px 4px;background:#eff3f8"></div>
<div class="abs" style="left:1050px;top:664.3px;width:347px;height:79.6px;border-radius:4px;background:#eff3f8"></div>
<div class="abs" style="left:1050px;top:746px;width:347px;height:10.7px;border-radius:0 0 4px 4px;background:#eff3f8"></div>
<div class="abs" style="left:1050px;top:759px;width:347px;height:20px;border-radius:4px 4px 0 0;background:#eff3f8"></div>
<div class="abs" style="left:1069.2px;top:593.6px;width:43.7px;height:43.7px;border-radius:50%;background:#f9c8d9"></div>
<div class="abs" style="left:1069.2px;top:687.7px;width:43.7px;height:44.2px;border-radius:50%;background:#fcd589"></div>
<svg class="abs" style="left:0;top:0" width="1424" height="996" viewBox="0 0 1424 996" fill="none" stroke-width="1.9">
 <g stroke="#893a5b" stroke-width="1.7"><rect x="1085.85" y="606.1" width="14.25" height="13.7" rx="1.6"/><path d="M1081.9 609 V622.6 Q1081.9 623.5 1082.8 623.5 H1096.8"/><circle cx="1093" cy="611.3" r="1.9"/></g>
 <path d="M1086.8 619.9 Q1088.5 616 1093 616 Q1097.5 616 1099.2 619.9Z" fill="#893a5b"/>
 <g stroke="#6b4600" stroke-width="1.7"><path d="M1082 719 V702.6 Q1082 701 1083.6 701 H1098.6 Q1100.2 701 1100.2 702.6 V714.2 Q1100.2 715.8 1098.6 715.8 H1084.9 Z" stroke-linejoin="round"/></g>
 <circle cx="1090.9" cy="706.2" r="2.1" fill="#6b4600"/><path d="M1087.2 713 V711.8 Q1087.2 709.9 1091 709.9 Q1094.9 709.9 1094.9 711.8 V713Z" fill="#6b4600"/>
</svg>
<div class="gt" style="left:1133px;top:586px;font-size:15px;color:#1f1f1f;-webkit-text-stroke:0.3px #1f1f1f;letter-spacing:0.3px">Sentiment analyzer</div>
<div class="gt" style="left:1133px;top:605.5px;font-size:15px;line-height:19.5px;color:#6b6e70;letter-spacing:0.36px;-webkit-text-stroke:0.15px #6b6e70">Analyze customer feedback to<br>reveal trends and make...</div>
<div class="gt" style="left:1133px;top:681px;font-size:15px;color:#1f1f1f;-webkit-text-stroke:0.3px #1f1f1f;letter-spacing:0.3px">Outreach specialist</div>
<div class="gt" style="left:1133px;top:700.5px;font-size:15px;line-height:19.5px;color:#6b6e70;letter-spacing:0.36px;-webkit-text-stroke:0.15px #6b6e70">Craft personalized messages to<br>potential customers, build...</div>
<!-- prompt footer -->
<div class="abs" style="left:1030px;top:773px;width:388px;height:171px;border-radius:22px;background:#fdfdfd;border:1px solid #ebebeb"></div>
<div class="abs" style="left:1048px;top:792.8px;width:351px;height:74.2px;border-radius:37px;border:1px solid #7f8285;background:#fdfdfd"></div>
<div class="gt" style="left:1073.5px;top:818px;font-size:19.8px;color:#747775">Enter a prompt here</div>
<div class="gt" style="left:1030px;width:388px;top:886px;text-align:center;font-size:14px;line-height:19.3px;color:#64676a;letter-spacing:0.1px;-webkit-text-stroke:0.2px #64676a">Gemini in Workspace can make mistakes,<br>so double-check responses. <span style="color:#1f1f1f;-webkit-text-stroke:0.35px #1f1f1f;text-decoration:underline;text-underline-offset:3px;text-decoration-color:#9aa0a6">Learn more</span></div>
<svg class="abs" style="left:1226px;top:837px" width="16" height="22" viewBox="0 0 16 22"><path d="M2 1 L2 17 L5.8 13.6 L8.6 20 L11.2 18.9 L8.5 12.6 L13.5 12.4 Z" fill="#000" stroke="#fff" stroke-width="1.2"/></svg>
</body></html>
